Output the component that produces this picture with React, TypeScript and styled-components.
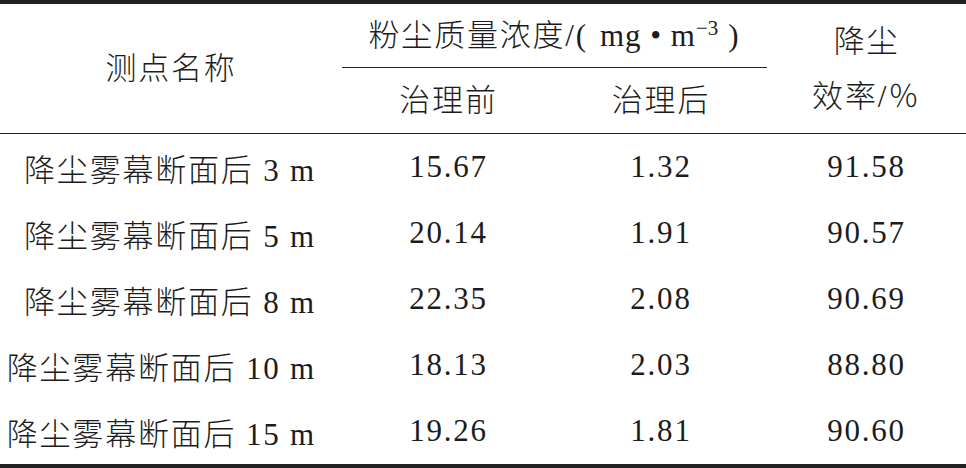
import React from 'react'
import styled, { createGlobalStyle } from 'styled-components'

const COLS = '342px 213px 212px 1fr'
const INK = '#1c1c1c'

const GlobalStyle = createGlobalStyle`
  body {
    margin: 0;
    background: #fff;
    color: ${INK};
    font-family: "Liberation Serif", "Noto Sans CJK SC", serif;
  }
`

const Table = styled.div`
  width: 966px;
  border-top: 4px solid #222;
  border-bottom: 4px solid #222;
  font-size: 31px;
  font-weight: 300;
  letter-spacing: 1.8px;
`

const Head = styled.div`
  display: grid;
  grid-template-columns: ${COLS};
  grid-template-rows: 64px 65px;
  border-bottom: 1.5px solid #222;
`

const HeadCell = styled.div<{ $col: string; $row: string; $rule?: boolean }>`
  grid-column: ${(p) => p.$col};
  grid-row: ${(p) => p.$row};
  display: flex;
  align-items: center;
  justify-content: center;
  text-align: center;
  line-height: 55px;
  border-bottom: ${(p) => (p.$rule ? '1.5px solid #222' : 'none')};
`

const Unit = styled.span`
  margin: 0 4px 0 2px;
  letter-spacing: 1px;
`

const Gap = styled.span`
  display: inline-block;
  width: ${(p: { $w: number }) => p.$w}px;
`

const Sup = styled.sup`
  font-size: 21px;
  vertical-align: 11px;
  line-height: 0;
  letter-spacing: 0;
`

const Row = styled.div`
  display: grid;
  grid-template-columns: ${COLS};
  height: 66px;
  align-items: center;
`

const NameCell = styled.div`
  text-align: right;
  padding-right: 26px;
  white-space: nowrap;
`

const NumCell = styled.div`
  text-align: center;
  letter-spacing: 1.8px;
`

const rows = [
  { dist: '3', before: '15.67', after: '1.32', rate: '91.58' },
  { dist: '5', before: '20.14', after: '1.91', rate: '90.57' },
  { dist: '8', before: '22.35', after: '2.08', rate: '90.69' },
  { dist: '10', before: '18.13', after: '2.03', rate: '88.80' },
  { dist: '15', before: '19.26', after: '1.81', rate: '90.60' },
]

function App() {
  return (
    <>
      <GlobalStyle />
      <Table>
        <Head>
          <HeadCell $col='1' $row='1 / 3'>测点名称</HeadCell>
          <HeadCell $col='2 / 4' $row='1' $rule>
            <span>
              粉尘质量浓度/(<Gap $w={10} />
              <Unit>
                mg • m<Sup>−3</Sup>
              </Unit>
              <Gap $w={6} />)
            </span>
          </HeadCell>
          <HeadCell $col='2' $row='2'>治理前</HeadCell>
          <HeadCell $col='3' $row='2'>治理后</HeadCell>
          <HeadCell $col='4' $row='1 / 3'>
            <span>
              降尘
              <br />
              效率/％
            </span>
          </HeadCell>
        </Head>
        {rows.map((r) => (
          <Row key={r.dist}>
            <NameCell>降尘雾幕断面后 {r.dist} m</NameCell>
            <NumCell>{r.before}</NumCell>
            <NumCell>{r.after}</NumCell>
            <NumCell>{r.rate}</NumCell>
          </Row>
        ))}
      </Table>
    </>
  )
}

export default App
